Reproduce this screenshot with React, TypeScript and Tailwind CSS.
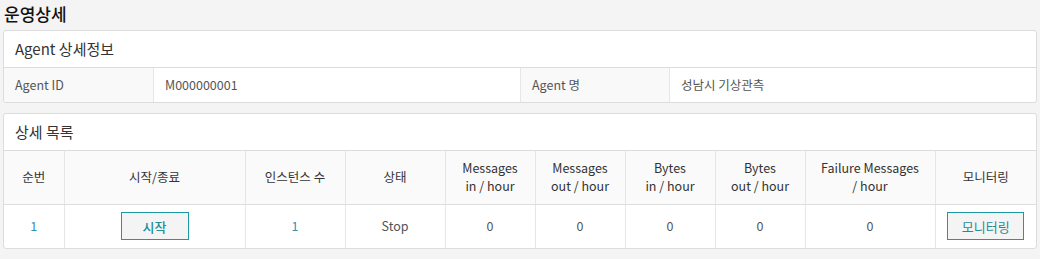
const FONT = { fontFamily: '"Noto Sans CJK KR", "Noto Sans", sans-serif' }

const COLS = [
  { w: 'w-[60px]', label: ['순번'] },
  { w: 'w-[181px]', label: ['시작/종료'] },
  { w: 'w-[100px]', label: ['인스턴스 수'] },
  { w: 'w-[100px]', label: ['상태'] },
  { w: 'w-[90px]', label: ['Messages', 'in / hour'] },
  { w: 'w-[90px]', label: ['Messages', 'out / hour'] },
  { w: 'w-[90px]', label: ['Bytes', 'in / hour'] },
  { w: 'w-[90px]', label: ['Bytes', 'out / hour'] },
  { w: 'w-[130px]', label: ['Failure Messages', '/ hour'] },
  { w: 'w-[101px]', label: ['모니터링'] },
]

function Panel({ title, children }: { title: string; children: React.ReactNode }) {
  return (
    <section className="bg-white border border-[#dcdcdc] rounded-[3px] overflow-hidden">
      <div className="h-[37px] flex items-center px-[11px] border-b border-[#dcdcdc] text-[15px] text-[#333]">
        {title}
      </div>
      {children}
    </section>
  )
}

export default function App() {
  return (
    <div className="bg-[#f4f4f4] w-[1040px] h-[259px] px-[3px] text-[13px] text-[#555]" style={FONT}>
      <h1 className="h-[30px] flex items-center pl-[1px] pb-[2px] text-[17px] font-medium text-[#111]">운영상세</h1>

      <Panel title="Agent 상세정보">
        <div className="grid grid-cols-[150px_366px_150px_1fr] h-[34px] text-[12.5px]">
          <div className="bg-[#f9f9f9] border-r border-[#e6e6e6] flex items-center pl-[11px]">Agent ID</div>
          <div className="flex items-center pl-[11px]">M000000001</div>
          <div className="bg-[#f9f9f9] border-x border-[#e6e6e6] flex items-center pl-[11px]">Agent 명</div>
          <div className="flex items-center pl-[11px]">성남시 기상관측</div>
        </div>
      </Panel>

      <div className="mt-[10px]">
        <Panel title="상세 목록">
          <table className="w-full table-fixed border-collapse text-center text-[12.5px]">
            <thead>
              <tr className="h-[53px] bg-[#fafafa] text-[#333]">
                {COLS.map((c, i) => (
                  <th
                    key={i}
                    className={`${c.w} font-normal leading-[18px] border-b border-[#dedede] ${i < COLS.length - 1 ? 'border-r border-r-[#e6e6e6]' : ''}`}
                  >
                    {c.label.map(l => (
                      <div key={l}>{l}</div>
                    ))}
                  </th>
                ))}
              </tr>
            </thead>
            <tbody>
              <tr className="h-[44px]">
                <td className="border-r border-[#e6e6e6] text-[#3b8db5]">1</td>
                <td className="border-r border-[#e6e6e6]">
                  <button className="w-[68px] h-[28px] border border-[#1b9aa3] bg-[#f4f4f4] text-[#1d8d98] text-[13px] font-medium">시작</button>
                </td>
                <td className="border-r border-[#e6e6e6] text-[#3b8db5]">1</td>
                <td className="border-r border-[#e6e6e6]">Stop</td>
                <td className="border-r border-[#e6e6e6]">0</td>
                <td className="border-r border-[#e6e6e6]">0</td>
                <td className="border-r border-[#e6e6e6]">0</td>
                <td className="border-r border-[#e6e6e6]">0</td>
                <td className="border-r border-[#e6e6e6]">0</td>
                <td>
                  <button className="w-[77px] h-[28px] border border-[#1b9aa3] bg-[#f4f4f4] text-[#1d8d98] text-[13px]">모니터링</button>
                </td>
              </tr>
            </tbody>
          </table>
        </Panel>
      </div>
    </div>
  )
}
